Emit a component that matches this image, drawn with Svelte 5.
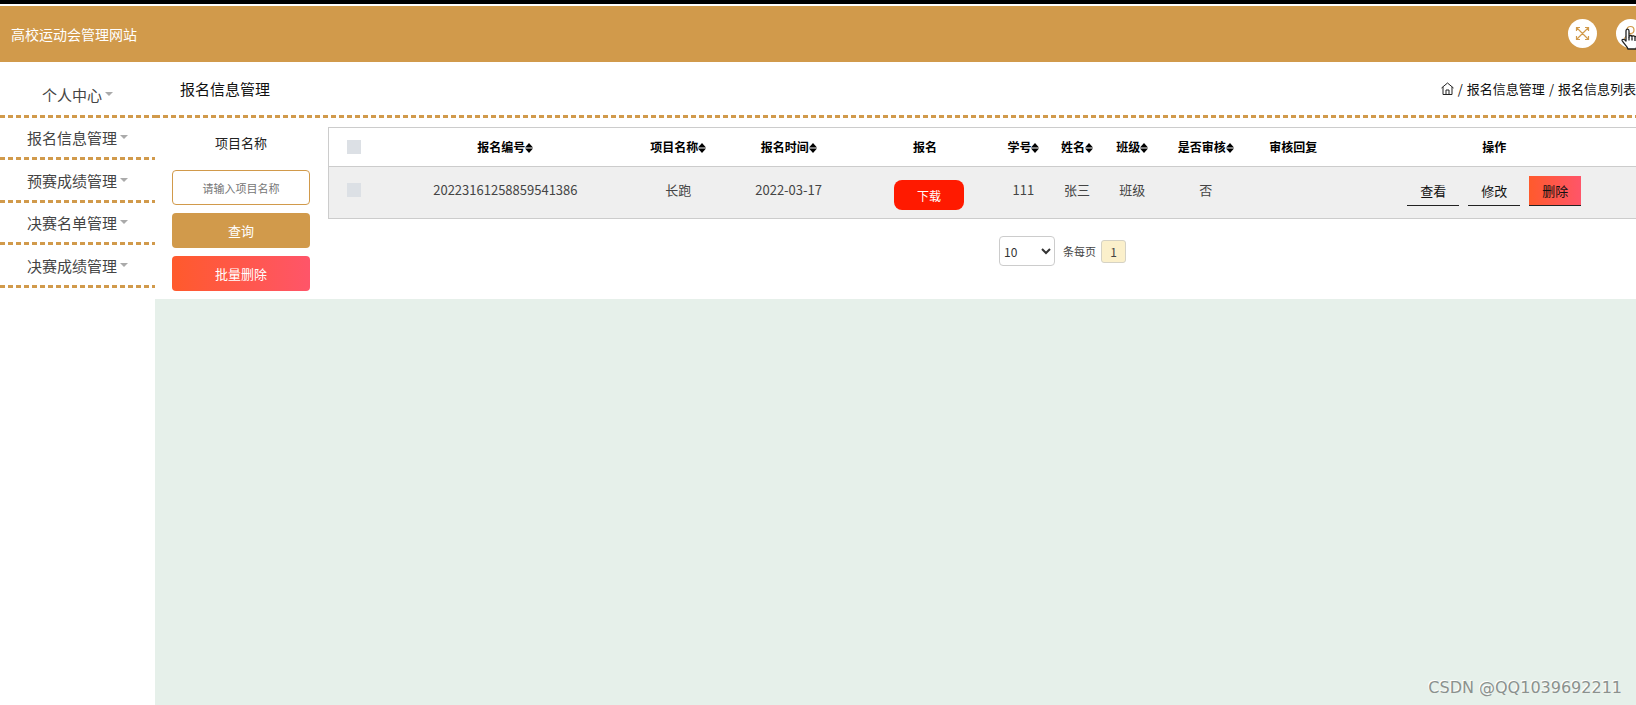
<script lang="ts">
  type Column = { label: string; width: number; sortable?: boolean };

  const menus = ['个人中心', '报名信息管理', '预赛成绩管理', '决赛名单管理', '决赛成绩管理'];

  const columns: Column[] = [
    { label: '报名编号', width: 254, sortable: true },
    { label: '项目名称', width: 92, sortable: true },
    { label: '报名时间', width: 129, sortable: true },
    { label: '报名', width: 144 },
    { label: '学号', width: 53, sortable: true },
    { label: '姓名', width: 54, sortable: true },
    { label: '班级', width: 57, sortable: true },
    { label: '是否审核', width: 90, sortable: true },
    { label: '审核回复', width: 85 },
    { label: '操作', width: 318 }
  ];
  const checkWidth = 50;
  const totalWidth = columns.reduce((sum, c) => sum + c.width, checkWidth);

  const rows = [
    {
      id: '20223161258859541386',
      project: '长跑',
      date: '2022-03-17',
      studentNo: '111',
      name: '张三',
      className: '班级',
      approved: '否',
      reply: ''
    }
  ];

  let keyword = $state('');
  let pageSize = $state('10');
  let selected = $state<string[]>([]);

  function toggleAll() {
    selected = selected.length === rows.length ? [] : rows.map((r) => r.id);
  }
</script>

<div class="page">
  <header class="topbar">
    <span class="brand">高校运动会管理网站</span>
    <div class="tools">
      <button class="round" aria-label="全屏">
        <svg width="15" height="15" viewBox="0 0 15 15" fill="none" stroke="#d19a4b" stroke-width="1.2">
          <path d="M2 2l11 11M13 2L2 13M1.500 5V1.500H5M10 1.500h3.500V5M13.500 10v3.500H10M5 13.500H1.500V10" />
        </svg>
      </button>
      <button class="round" aria-label="用户">
        <svg width="15" height="17" viewBox="0 0 15 17" fill="none" stroke="#d19a4b" stroke-width="1.2">
          <circle cx="7.5" cy="5" r="3.5" />
          <path d="M1 16c0-8 13-8 13 0" />
        </svg>
        <svg class="pointer" width="18" height="23" viewBox="0 0 18 23" fill="#fff" stroke="#222" stroke-width="1.3" stroke-linejoin="round">
          <path d="M5 13V3c0-2.500 3-2.500 3 0v6c0-2 3-2 3 0 0-1.700 3-1.700 3 .5 0-1.500 3-1.500 3 1V15c0 3-1.500 3.500-2 6H7C6.500 18.500 3 16 1.200 12.800 0.500 11 3 10.500 5 13z" />
          <path d="M8 9v3.500M11 9.500v3M14 10v3" />
        </svg>
      </button>
    </div>
  </header>

  <div class="body">
    <nav class="sidebar">
      {#each menus as menu}
        <button class="menu dashed">{menu}<span class="caret"></span></button>
      {/each}
    </nav>

    <main class="main">
      <div class="titlebar dashed">
        <h1>报名信息管理</h1>
        <div class="crumbs">
          <a href="#home" aria-label="首页">
            <svg width="13" height="13" viewBox="0 0 13 13" fill="none" stroke="#222" stroke-width="1">
              <path d="M.5 6l6-5 6 5M2 5v7.500h9V5M5 12.500V8h3v4.500" />
            </svg>
          </a>
          <span>/</span><span>报名信息管理</span><span>/</span><span>报名信息列表</span>
        </div>
      </div>

      <div class="panel">
        <form class="filters" onsubmit={(e) => e.preventDefault()}>
          <label for="keyword">项目名称</label>
          <input id="keyword" type="text" placeholder="请输入项目名称" bind:value={keyword} />
          <button class="search" type="submit">查询</button>
          <button class="danger" type="button">批量删除</button>
        </form>

        <div class="list">
          <table>
            <colgroup>
              <col style="width: {(checkWidth / totalWidth) * 100}%" />
              {#each columns as col}
                <col style="width: {(col.width / totalWidth) * 100}%" />
              {/each}
            </colgroup>
            <thead>
              <tr>
                <th>
                  <input type="checkbox" aria-label="全选" checked={selected.length === rows.length} onchange={toggleAll} />
                </th>
                {#each columns as col}
                  <th>
                    {col.label}{#if col.sortable}<svg class="sort" width="8" height="10" viewBox="0 0 7 10" preserveAspectRatio="none"><path d="M3.500 0L7 4.500H0zM3.500 10L0 5.500h7z" /></svg>{/if}
                  </th>
                {/each}
              </tr>
            </thead>
            <tbody>
              {#each rows as row}
                <tr>
                  <td><input type="checkbox" aria-label="选择" value={row.id} bind:group={selected} /></td>
                  <td>{row.id}</td>
                  <td>{row.project}</td>
                  <td>{row.date}</td>
                  <td class="file"><button class="download">下载</button></td>
                  <td>{row.studentNo}</td>
                  <td>{row.name}</td>
                  <td>{row.className}</td>
                  <td>{row.approved}</td>
                  <td>{row.reply}</td>
                  <td class="ops">
                    <div class="actions">
                      <button>查看</button>
                      <button>修改</button>
                      <button class="remove">删除</button>
                    </div>
                  </td>
                </tr>
              {/each}
            </tbody>
          </table>

          <div class="pager">
            <select id="page-size" bind:value={pageSize}>
              <option>10</option>
              <option>25</option>
              <option>50</option>
            </select>
            <label for="page-size">条每页</label>
            <button class="current">1</button>
          </div>
        </div>
      </div>
    </main>
  </div>

  <div class="watermark">CSDN @QQ1039692211</div>
</div>

<style>
  :global(body) { background: #fff; }

  .page {
    --gold: #d19a4b;
    position: relative;
    display: flex;
    flex-direction: column;
    min-height: 100vh;
    box-sizing: border-box;
    overflow: hidden;
    border-top: 4px solid #000;
    font-family: "Noto Sans CJK SC", sans-serif;
    font-size: 13px;
    color: #222;
  }

  button, input, select { font-family: inherit; box-sizing: border-box; }
  button { border: none; padding: 0; cursor: pointer; }

  .topbar {
    display: flex;
    align-items: center;
    justify-content: space-between;
    height: 56px;
    margin-top: 2px;
    padding-left: 11px;
    background: var(--gold);
  }
  .brand { color: #fff; font-size: 14px; }
  .tools { display: flex; gap: 19px; margin-right: -9px; padding-bottom: 2px; }
  .round {
    position: relative;
    display: flex;
    align-items: center;
    justify-content: center;
    width: 29px;
    height: 29px;
    border-radius: 50%;
    background: #fff;
  }
  .pointer { position: absolute; left: 5px; top: 9px; }

  /* 5px dash, 3px gap */
  .dashed {
    background: repeating-linear-gradient(90deg, var(--gold) 0 5px, transparent 5px 8px) left bottom / 100% 3px no-repeat;
  }

  .body { display: flex; flex: 1; }

  .sidebar { width: 155px; flex-shrink: 0; }
  .menu {
    display: flex;
    align-items: center;
    justify-content: center;
    width: 100%;
    height: 42px;
    padding-bottom: 3px;
    font-size: 15px;
    color: #444;
  }
  .menu:nth-child(odd) { height: 43px; }
  .menu:first-child { height: 56px; padding-top: 12px; }
  .caret {
    margin: 0 0 1px 3px;
    border: 4px solid transparent;
    border-top-color: #aaa;
    border-bottom: none;
  }

  .main { flex: 1; min-width: 0; background: #e6f0ea; }
  .titlebar {
    display: flex;
    align-items: center;
    justify-content: space-between;
    height: 56px;
    box-sizing: border-box;
    padding: 0 0 3px 25px;
    background-color: #fff;
    color: #111;
  }
  h1 { margin: 0; font-size: 15px; font-weight: 400; }
  .crumbs { display: flex; align-items: center; gap: 4px; }
  .crumbs a { display: flex; }

  .panel {
    display: flex;
    gap: 18px;
    padding: 9px 0 8px 17px;
    background: #fff;
  }
  .filters {
    display: flex;
    flex-direction: column;
    flex-shrink: 0;
    gap: 8px;
    width: 138px;
  }
  .filters label { height: 35px; line-height: 32px; text-align: center; }
  .filters input {
    width: 100%;
    height: 35px;
    border: 1px solid var(--gold);
    border-radius: 4px;
    text-align: center;
    font-size: 11px;
  }
  .filters input::placeholder { color: #757575; }
  .filters button { height: 35px; border-radius: 4px; color: #fff; font-size: 13px; }
  .search { background: var(--gold); }
  .danger, .remove { background: linear-gradient(90deg, #ff5a2c, #ff5569); }

  /* the table runs on past the right edge of the window */
  .list { flex: 1; min-width: 0; margin-right: -18px; }
  table {
    width: 100%;
    table-layout: fixed;
    border-collapse: collapse;
    border: 1px solid #ccc;
  }
  th { height: 37px; padding: 0 0 1px; font-size: 12px; color: #000; white-space: nowrap; }
  tbody tr { background: #efefef; border-top: 1px solid #ccc; }
  td {
    height: 52px;
    padding: 14px 0 0;
    box-sizing: border-box;
    line-height: 18px;
    text-align: center;
    vertical-align: top;
    color: #444;
  }
  .sort { vertical-align: -1px; }
  input[type='checkbox'] {
    display: block;
    appearance: none;
    width: 14px;
    height: 14px;
    margin: 2px auto;
    background: #dce0e5;
  }
  input[type='checkbox']:checked { background: var(--gold); }

  td.file { padding: 13px 0 0 8px; }
  td.ops { padding-top: 9px; }
  .download {
    width: 70px;
    height: 30px;
    border-radius: 8px;
    background: #ff1a00;
    color: #fff;
    font-size: 12px;
  }
  .actions { display: flex; justify-content: center; gap: 9px; }
  .actions button {
    width: 52px;
    height: 30px;
    border-bottom: 1px solid #222;
    color: #111;
    font-size: 13px;
  }
  .actions button:not(.remove) { background: none; }

  .pager {
    display: flex;
    align-items: center;
    justify-content: center;
    margin-top: 17px;
    padding-left: 143px;
    font-size: 11px;
    color: #444;
  }
  .pager select {
    width: 56px;
    height: 30px;
    border: 1px solid #ccc;
    border-radius: 4px;
    background: #fff;
    color: #333;
    font-size: 12px;
  }
  .pager label { margin: 0 5px 0 8px; }
  .current {
    width: 25px;
    height: 23px;
    border: 1px solid #d5d2c5;
    border-radius: 3px;
    background: #fbf0cb;
    color: #444;
    font-size: 12px;
  }

  .watermark {
    position: absolute;
    right: 14px;
    bottom: 8px;
    font-family: "DejaVu Sans", sans-serif;
    font-size: 16px;
    color: #8b918e;
    text-shadow: -1px -1px 0 #fff;
  }
</style>
